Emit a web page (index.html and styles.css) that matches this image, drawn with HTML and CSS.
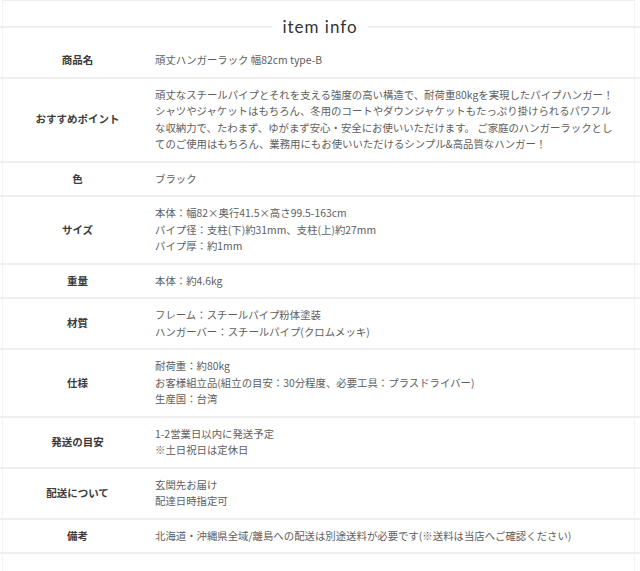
FILE: index.html
```html
<!DOCTYPE html>
<html lang="ja">
<head>
<meta charset="utf-8">
<title>item info</title>
<link rel="stylesheet" href="styles.css">
</head>
<body>
<div class="frame">
  <h2 class="heading"><span class="heading-text">item info</span></h2>
  <div class="spec">
    <div class="row row-first">
      <div class="label">商品名</div>
      <div class="value">頑丈ハンガーラック 幅82cm type-B</div>
    </div>
    <div class="row">
      <div class="label">おすすめポイント</div>
      <div class="value">頑丈なスチールパイプとそれを支える強度の高い構造で、耐荷重80kgを実現したパイプハンガー！<br>シャツやジャケットはもちろん、冬用のコートやダウンジャケットもたっぷり掛けられるパワフル<br>な収納力で、たわまず、ゆがまず安心・安全にお使いいただけます。 ご家庭のハンガーラックとし<br>てのご使用はもちろん、業務用にもお使いいただけるシンプル&amp;高品質なハンガー！</div>
    </div>
    <div class="row">
      <div class="label">色</div>
      <div class="value">ブラック</div>
    </div>
    <div class="row">
      <div class="label">サイズ</div>
      <div class="value">本体：幅82×奥行41.5×高さ99.5-163cm<br>パイプ径：支柱(下)約31mm、支柱(上)約27mm<br>パイプ厚：約1mm</div>
    </div>
    <div class="row">
      <div class="label">重量</div>
      <div class="value">本体：約4.6kg</div>
    </div>
    <div class="row">
      <div class="label">材質</div>
      <div class="value">フレーム：スチールパイプ粉体塗装<br>ハンガーバー：スチールパイプ(クロムメッキ)</div>
    </div>
    <div class="row">
      <div class="label">仕様</div>
      <div class="value">耐荷重：約80kg<br>お客様組立品(組立の目安：30分程度、必要工具：プラスドライバー)<br>生産国：台湾</div>
    </div>
    <div class="row">
      <div class="label">発送の目安</div>
      <div class="value">1-2営業日以内に発送予定<br>※土日祝日は定休日</div>
    </div>
    <div class="row">
      <div class="label">配送について</div>
      <div class="value">玄関先お届け<br>配達日時指定可</div>
    </div>
    <div class="row">
      <div class="label">備考</div>
      <div class="value">北海道・沖縄県全域/離島への配送は別途送料が必要です(※送料は当店へご確認ください)</div>
    </div>
  </div>
</div>
</body>
</html>
```

FILE: styles.css
```css
html, body {
  margin: 0;
  padding: 0;
  background: #ffffff;
}

body {
  font-family: "Noto Sans CJK JP", "Noto Sans", sans-serif;
  color: #555555;
  min-height: 571px;
}

.frame {
  margin: 0 5px 0 2px;
  min-height: 571px;
  border-left: 1px solid #f2f2f2;
  border-right: 1px solid #f2f2f2;
  border-top: 1px solid #eeeeee;
  box-sizing: border-box;
}

.heading {
  margin: 0 -6px 0 -3px;
  padding-top: 8px;
  height: 35px;
  display: flex;
  align-items: center;
  font-family: "Lato", "DejaVu Sans", sans-serif;
  font-weight: 400;
  font-size: 17px;
  letter-spacing: 1px;
  color: #333333;
}

.heading::before,
.heading::after {
  content: "";
  flex: 1;
  height: 2px;
  background: #eeeeee;
}

.heading-text {
  padding: 0 10px;
  line-height: 20px;
}

.spec {
  margin: 0 -6px 0 -3px;
}

.row {
  display: grid;
  grid-template-columns: 155px 1fr;
  align-items: center;
  border-bottom: 2px solid #efefef;
  padding: 8px 0 8px;
}

.label {
  text-align: center;
  font-size: 10.5px;
  font-weight: 700;
  color: #3c3c3c;
  line-height: 16.5px;
}

.value {
  font-size: 10.4px;
  line-height: 16.5px;
  color: #5e5e5e;
  white-space: nowrap;
}
```
